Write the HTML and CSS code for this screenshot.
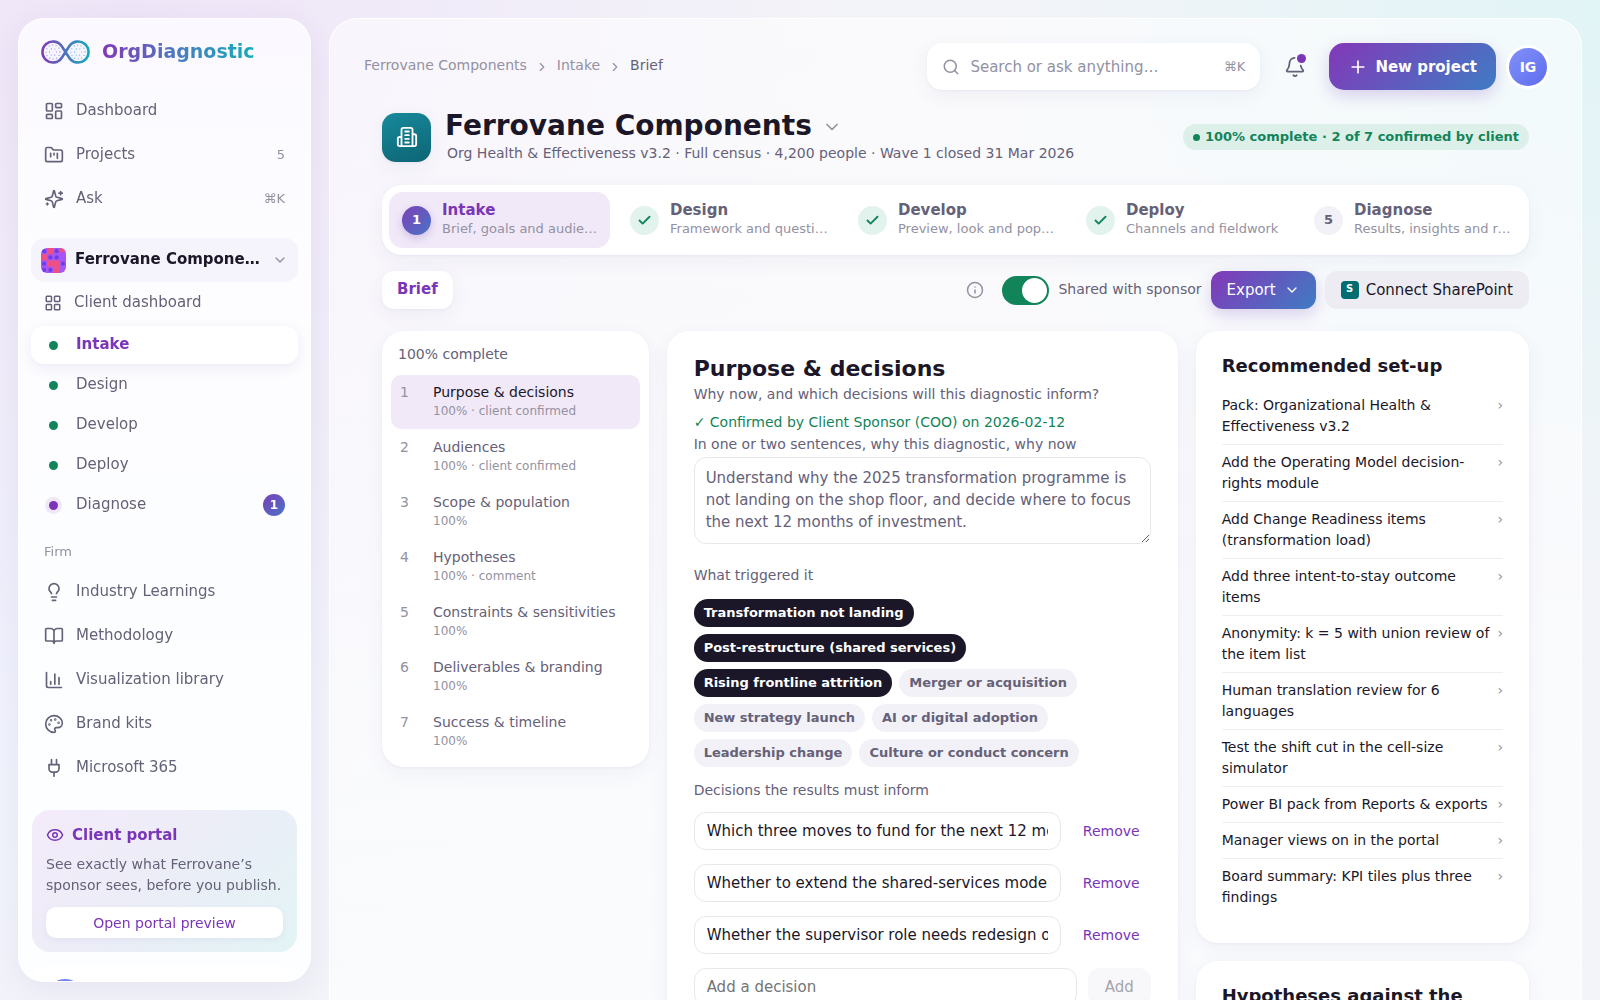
FILE: index.html
```html
<!DOCTYPE html>
<html lang="en">
<head>
<meta charset="utf-8">
<meta name="viewport" content="width=device-width, initial-scale=1">
<title>Brief · Ferrovane Components · OrgDiagnostic</title>
<link rel="stylesheet" href="styles.css">
</head>
<body>
<svg class="sprite" aria-hidden="true">
  <symbol id="i-dashboard" viewBox="0 0 24 24"><rect x="3" y="3" width="7" height="9" rx="1"/><rect x="14" y="3" width="7" height="5" rx="1"/><rect x="14" y="12" width="7" height="9" rx="1"/><rect x="3" y="16" width="7" height="5" rx="1"/></symbol>
  <symbol id="i-folder" viewBox="0 0 24 24"><path d="M4 20h16a2 2 0 0 0 2-2V8a2 2 0 0 0-2-2h-7.93a2 2 0 0 1-1.66-.9l-.82-1.2A2 2 0 0 0 7.93 3H4a2 2 0 0 0-2 2v13c0 1.1.9 2 2 2ZM8 10v4M12 10v2M16 10v6"/></symbol>
  <symbol id="i-sparkles" viewBox="0 0 24 24"><path d="M9.937 15.5A2 2 0 0 0 8.5 14.063l-6.135-1.582a.5.5 0 0 1 0-.962L8.5 9.936A2 2 0 0 0 9.937 8.5l1.582-6.135a.5.5 0 0 1 .963 0L14.063 8.5A2 2 0 0 0 15.5 9.937l6.135 1.581a.5.5 0 0 1 0 .964L15.5 14.063a2 2 0 0 0-1.437 1.437l-1.582 6.135a.5.5 0 0 1-.963 0zM20 3v4M22 5h-4M4 17v2M5 18H3"/></symbol>
  <symbol id="i-grid" viewBox="0 0 24 24"><rect x="3" y="3" width="7" height="7" rx="1"/><rect x="14" y="3" width="7" height="7" rx="1"/><rect x="14" y="14" width="7" height="7" rx="1"/><rect x="3" y="14" width="7" height="7" rx="1"/></symbol>
  <symbol id="i-down" viewBox="0 0 24 24"><path d="m6 9 6 6 6-6"/></symbol>
  <symbol id="i-right" viewBox="0 0 24 24"><path d="m9 18 6-6-6-6"/></symbol>
  <symbol id="i-bulb" viewBox="0 0 24 24"><path d="M15 14c.2-1 .7-1.700 1.500-2.500 1-.9 1.500-2.200 1.500-3.500A6 6 0 0 0 6 8c0 1 .2 2.200 1.500 3.500.7.7 1.300 1.500 1.500 2.500M9 18h6M10 22h4"/></symbol>
  <symbol id="i-book" viewBox="0 0 24 24"><path d="M12 7v14M3 18a1 1 0 0 1-1-1V4a1 1 0 0 1 1-1h5a4 4 0 0 1 4 4 4 4 0 0 1 4-4h5a1 1 0 0 1 1 1v13a1 1 0 0 1-1 1h-6a3 3 0 0 0-3 3 3 3 0 0 0-3-3z"/></symbol>
  <symbol id="i-chart" viewBox="0 0 24 24"><path d="M3 3v16a2 2 0 0 0 2 2h16M18 17V9M13 17V5M8 17v-3"/></symbol>
  <symbol id="i-palette" viewBox="0 0 24 24"><circle cx="13.500" cy="6.500" r=".5"/><circle cx="17.500" cy="10.500" r=".5"/><circle cx="8.500" cy="7.500" r=".5"/><circle cx="6.500" cy="12.500" r=".5"/><path d="M12 2C6.500 2 2 6.500 2 12s4.500 10 10 10c.926 0 1.648-.746 1.648-1.688 0-.437-.18-.835-.437-1.125-.29-.289-.438-.652-.438-1.125a1.640 1.640 0 0 1 1.668-1.668h1.996c3.051 0 5.555-2.503 5.555-5.554C21.965 6.012 17.461 2 12 2z"/></symbol>
  <symbol id="i-plug" viewBox="0 0 24 24"><path d="M12 22v-5M9 8V2M15 8V2M18 8v5a4 4 0 0 1-4 4h-4a4 4 0 0 1-4-4V8Z"/></symbol>
  <symbol id="i-eye" viewBox="0 0 24 24"><path d="M2.062 12.348a1 1 0 0 1 0-.696 10.750 10.750 0 0 1 19.876 0 1 1 0 0 1 0 .696 10.750 10.750 0 0 1-19.876 0"/><circle cx="12" cy="12" r="3"/></symbol>
  <symbol id="i-building" viewBox="0 0 24 24"><path d="M6 22V4a2 2 0 0 1 2-2h8a2 2 0 0 1 2 2v18ZM6 12H4a2 2 0 0 0-2 2v6a2 2 0 0 0 2 2h2M18 9h2a2 2 0 0 1 2 2v9a2 2 0 0 1-2 2h-2M10 6h4M10 10h4M10 14h4M10 18h4"/></symbol>
  <symbol id="i-bell" viewBox="0 0 24 24"><path d="M10.268 21a2 2 0 0 0 3.464 0M11.500 2.020A6 6 0 0 0 6 8c0 4.499-1.411 5.956-2.738 7.326A1 1 0 0 0 4 17h16a1 1 0 0 0 .74-1.673C19.700 14.250 18.700 13.100 18.250 10.500"/></symbol>
  <symbol id="i-search" viewBox="0 0 24 24"><circle cx="11" cy="11" r="8"/><path d="m21 21-4.300-4.300"/></symbol>
  <symbol id="i-plus" viewBox="0 0 24 24"><path d="M5 12h14M12 5v14"/></symbol>
  <symbol id="i-info" viewBox="0 0 24 24"><circle cx="12" cy="12" r="10"/><path d="M12 16v-4M12 8h.01"/></symbol>
  <symbol id="i-check" viewBox="0 0 24 24"><path d="M20 6 9 17l-5-5"/></symbol>
</svg>

<div class="app">
  <aside class="sidebar">
    <a class="brand" href="#">
      <svg class="brand-mark" viewBox="0 0 49 24" aria-hidden="true">
        <defs><linearGradient id="mark" gradientUnits="userSpaceOnUse" x1="0" y1="0" x2="49" y2="0"><stop offset="0" stop-color="#8338b0"/><stop offset=".5" stop-color="#4f74bd"/><stop offset="1" stop-color="#11abb9"/></linearGradient></defs>
        <path d="M20.800 6.300A10.500 10.500 0 1 0 20.800 17.700L28.200 6.300A10.500 10.500 0 1 1 28.200 17.700Z" fill="#f5f4ff" stroke="url(#mark)" stroke-width="2.600" stroke-linejoin="round"/>
        <g fill="none" stroke="#9a86dc" stroke-width="1.200" stroke-linecap="round" stroke-dasharray="0 3.600">
          <circle cx="12" cy="12" r="7"/><circle cx="12" cy="12" r="3.500"/>
          <circle cx="37" cy="12" r="7" stroke="#58b4dc"/><circle cx="37" cy="12" r="3.500" stroke="#58b4dc"/>
        </g>
      </svg>
      <span class="brand-name">OrgDiagnostic</span>
    </a>

    <nav class="nav" aria-label="Workspace">
      <a class="nav-item" href="#"><svg class="icon"><use href="#i-dashboard"/></svg><span class="nav-label">Dashboard</span></a>
      <a class="nav-item" href="#"><svg class="icon"><use href="#i-folder"/></svg><span class="nav-label">Projects</span><span class="nav-hint">5</span></a>
      <a class="nav-item" href="#"><svg class="icon"><use href="#i-sparkles"/></svg><span class="nav-label">Ask</span><span class="nav-hint">⌘K</span></a>
    </nav>

    <button class="project-switch" type="button">
      <svg class="project-thumb" viewBox="0 0 24 24" aria-hidden="true">
        <rect width="24" height="24" fill="#a855f7"/>
        <g fill="#ef5084"><rect x="6" width="6" height="6"/><rect x="18" width="6" height="4"/><rect y="6" width="6" height="6"/><rect x="6" y="12" width="12" height="6"/><rect x="12" y="18" width="6" height="6"/></g>
        <g fill="#6d3fe0"><circle cx="3" cy="3" r="2"/><circle cx="15" cy="3" r="2"/><circle cx="9" cy="9" r="2"/><circle cx="15" cy="9" r="2"/><circle cx="3" cy="15" r="2"/><circle cx="21" cy="15" r="2"/><circle cx="9" cy="21" r="2"/><circle cx="3" cy="21" r="2"/></g>
      </svg>
      <span class="project-name">Ferrovane Components</span>
      <svg class="icon icon-sm muted"><use href="#i-down"/></svg>
    </button>

    <nav class="subnav" aria-label="Project">
      <a class="sub-item sub-first" href="#"><svg class="icon icon-md"><use href="#i-grid"/></svg><span class="nav-label">Client dashboard</span></a>
      <a class="sub-item active" href="#" aria-current="page"><span class="dot"></span><span class="nav-label">Intake</span></a>
      <a class="sub-item" href="#"><span class="dot"></span><span class="nav-label">Design</span></a>
      <a class="sub-item" href="#"><span class="dot"></span><span class="nav-label">Develop</span></a>
      <a class="sub-item" href="#"><span class="dot"></span><span class="nav-label">Deploy</span></a>
      <a class="sub-item" href="#"><span class="dot current"></span><span class="nav-label">Diagnose</span><span class="count">1</span></a>
    </nav>

    <h2 class="nav-heading">Firm</h2>
    <nav class="nav" aria-label="Firm">
      <a class="nav-item" href="#"><svg class="icon"><use href="#i-bulb"/></svg><span class="nav-label">Industry Learnings</span></a>
      <a class="nav-item" href="#"><svg class="icon"><use href="#i-book"/></svg><span class="nav-label">Methodology</span></a>
      <a class="nav-item" href="#"><svg class="icon"><use href="#i-chart"/></svg><span class="nav-label">Visualization library</span></a>
      <a class="nav-item" href="#"><svg class="icon"><use href="#i-palette"/></svg><span class="nav-label">Brand kits</span></a>
      <a class="nav-item" href="#"><svg class="icon"><use href="#i-plug"/></svg><span class="nav-label">Microsoft 365</span></a>
    </nav>

    <section class="portal">
      <h2 class="portal-title"><svg class="icon"><use href="#i-eye"/></svg>Client portal</h2>
      <p class="portal-text">See exactly what Ferrovane’s sponsor sees, before you publish.</p>
      <button class="portal-button" type="button">Open portal preview</button>
    </section>

    <button class="account" type="button"><span class="account-avatar"></span><span class="account-name">Iselle</span></button>
  </aside>

  <main class="main">
    <header class="topbar">
      <nav class="crumbs" aria-label="Breadcrumb">
        <a href="#">Ferrovane Components</a><svg class="icon icon-xs"><use href="#i-right"/></svg><a href="#">Intake</a><svg class="icon icon-xs"><use href="#i-right"/></svg><span class="crumb-here">Brief</span>
      </nav>
      <label class="search">
        <svg class="icon"><use href="#i-search"/></svg>
        <input type="search" placeholder="Search or ask anything…" aria-label="Search or ask anything">
        <kbd>⌘K</kbd>
      </label>
      <button class="bell" type="button" aria-label="Notifications"><svg class="icon icon-lg"><use href="#i-bell"/></svg><span class="bell-dot"></span></button>
      <button class="primary new-project" type="button"><svg class="icon"><use href="#i-plus"/></svg>New project</button>
      <button class="avatar" type="button">IG</button>
    </header>

    <div class="content">
      <section class="hero">
        <span class="hero-icon"><svg class="icon icon-lg"><use href="#i-building"/></svg></span>
        <div class="hero-text">
          <h1>Ferrovane Components <svg class="icon"><use href="#i-down"/></svg></h1>
          <p>Org Health &amp; Effectiveness v3.2 · Full census · 4,200 people · Wave 1 closed 31 Mar 2026</p>
        </div>
        <span class="status"><span class="status-dot"></span>100% complete · 2 of 7 confirmed by client</span>
      </section>

      <nav class="stepper" aria-label="Project stages">
        <a class="step active" href="#" aria-current="step"><span class="step-mark">1</span><span class="step-text"><strong>Intake</strong><small>Brief, goals and audiences</small></span></a>
        <a class="step done" href="#"><span class="step-mark"><svg class="icon icon-sm"><use href="#i-check"/></svg></span><span class="step-text"><strong>Design</strong><small>Framework and questions</small></span></a>
        <a class="step done" href="#"><span class="step-mark"><svg class="icon icon-sm"><use href="#i-check"/></svg></span><span class="step-text"><strong>Develop</strong><small>Preview, look and population</small></span></a>
        <a class="step done" href="#"><span class="step-mark"><svg class="icon icon-sm"><use href="#i-check"/></svg></span><span class="step-text"><strong>Deploy</strong><small>Channels and fieldwork</small></span></a>
        <a class="step" href="#"><span class="step-mark">5</span><span class="step-text"><strong>Diagnose</strong><small>Results, insights and reports</small></span></a>
      </nav>

      <div class="toolbar">
        <a class="tab" href="#" aria-current="page">Brief</a>
        <svg class="icon info"><use href="#i-info"/></svg>
        <input class="switch" type="checkbox" id="shared" checked>
        <label class="switch-label" for="shared">Shared with sponsor</label>
        <button class="primary export" type="button">Export<svg class="icon icon-sm"><use href="#i-down"/></svg></button>
        <button class="secondary" type="button"><span class="sp-logo">S</span>Connect SharePoint</button>
      </div>

      <div class="columns">
        <nav class="card outline" aria-label="Brief sections">
          <p class="outline-head">100% complete</p>
          <a class="outline-item active" href="#"><span class="num">1</span><span>Purpose &amp; decisions<small>100% · client confirmed</small></span></a>
          <a class="outline-item" href="#"><span class="num">2</span><span>Audiences<small>100% · client confirmed</small></span></a>
          <a class="outline-item" href="#"><span class="num">3</span><span>Scope &amp; population<small>100%</small></span></a>
          <a class="outline-item" href="#"><span class="num">4</span><span>Hypotheses<small>100% · comment</small></span></a>
          <a class="outline-item" href="#"><span class="num">5</span><span>Constraints &amp; sensitivities<small>100%</small></span></a>
          <a class="outline-item" href="#"><span class="num">6</span><span>Deliverables &amp; branding<small>100%</small></span></a>
          <a class="outline-item" href="#"><span class="num">7</span><span>Success &amp; timeline<small>100%</small></span></a>
        </nav>

        <section class="card form">
          <h2>Purpose &amp; decisions</h2>
          <p class="lead">Why now, and which decisions will this diagnostic inform?</p>
          <p class="confirmed">✓ Confirmed by Client Sponsor (COO) on 2026-02-12</p>
          <label class="field-label" for="why">In one or two sentences, why this diagnostic, why now</label>
          <textarea id="why" rows="3">Understand why the 2025 transformation programme is not landing on the shop floor, and decide where to focus the next 12 months of investment.</textarea>

          <p class="field-label group-label">What triggered it</p>
          <div class="chips">
            <button class="chip on" type="button" aria-pressed="true">Transformation not landing</button>
            <button class="chip on" type="button" aria-pressed="true">Post-restructure (shared services)</button>
            <button class="chip on" type="button" aria-pressed="true">Rising frontline attrition</button>
            <button class="chip" type="button">Merger or acquisition</button>
            <button class="chip" type="button">New strategy launch</button>
            <button class="chip" type="button">AI or digital adoption</button>
            <button class="chip" type="button">Leadership change</button>
            <button class="chip" type="button">Culture or conduct concern</button>
          </div>

          <p class="field-label decisions-label">Decisions the results must inform</p>
          <div class="decisions">
            <div class="decision"><input type="text" aria-label="Decision 1" value="Which three moves to fund for the next 12 months"><button class="link" type="button">Remove</button></div>
            <div class="decision"><input type="text" aria-label="Decision 2" value="Whether to extend the shared-services model to all sites"><button class="link" type="button">Remove</button></div>
            <div class="decision"><input type="text" aria-label="Decision 3" value="Whether the supervisor role needs redesign or support"><button class="link" type="button">Remove</button></div>
            <div class="decision"><input type="text" aria-label="New decision" placeholder="Add a decision"><button class="add" type="button" disabled>Add</button></div>
          </div>
        </section>

        <div class="side">
          <section class="card setup">
            <h3>Recommended set-up</h3>
            <ul>
              <li><a href="#">Pack: Organizational Health &amp; Effectiveness v3.2<span>›</span></a></li>
              <li><a href="#">Add the Operating Model decision-rights module<span>›</span></a></li>
              <li><a href="#">Add Change Readiness items (transformation load)<span>›</span></a></li>
              <li><a href="#">Add three intent-to-stay outcome items<span>›</span></a></li>
              <li><a href="#">Anonymity: k = 5 with union review of the item list<span>›</span></a></li>
              <li><a href="#">Human translation review for 6 languages<span>›</span></a></li>
              <li><a href="#">Test the shift cut in the cell-size simulator<span>›</span></a></li>
              <li><a href="#">Power BI pack from Reports &amp; exports<span>›</span></a></li>
              <li><a href="#">Manager views on in the portal<span>›</span></a></li>
              <li><a href="#">Board summary: KPI tiles plus three findings<span>›</span></a></li>
            </ul>
          </section>
          <section class="card setup">
            <h3>Hypotheses against the evidence</h3>
          </section>
        </div>
      </div>
    </div>
  </main>
</div>
</body>
</html>
```
FILE: styles.css
```css
:root {
  --ink: #1b1728;
  --text: #656178;
  --muted: #9391a2;
  --purple: #7a35b8;
  --green: #12845a;
  --line: #efeef3;
  --brand: linear-gradient(135deg, #8338b8, #3f7cc4);
  --shadow: 0 6px 20px rgba(70, 60, 130, .06), 0 1px 3px rgba(70, 60, 130, .05);
}

* { box-sizing: border-box; }

body {
  margin: 0;
  font: 15px/22px "DejaVu Sans", Verdana, sans-serif;
  color: var(--ink);
  background:
    radial-gradient(circle at 8% 0, #efe5f8 0, transparent 42%),
    radial-gradient(circle at 100% 0, #e1f4f6 0, transparent 32%),
    radial-gradient(circle at 0 62%, #f0f2fd 0, transparent 30%),
    #f3f4f9;
}

h1, h2, h3, p, ul { margin: 0; padding: 0; }
ul { list-style: none; }
a { color: inherit; text-decoration: none; }
button, input, textarea, kbd { font: inherit; color: inherit; }
button { border: 0; background: none; padding: 0; cursor: pointer; }
.sprite { display: none; }

.icon {
  width: 20px;
  height: 20px;
  flex: none;
  fill: none;
  stroke: currentColor;
  stroke-width: 2;
  stroke-linecap: round;
  stroke-linejoin: round;
}
.icon-xs { width: 14px; height: 14px; }
.icon-sm { width: 16px; height: 16px; }
.icon-md { width: 18px; height: 18px; }
.icon-lg { width: 22px; height: 22px; }
.muted { color: var(--muted); }

.app {
  height: 100vh;
  overflow-y: auto;
  scrollbar-width: none;
  display: grid;
  grid-template-columns: 293px minmax(0, 1fr);
  align-items: start;
  gap: 18px;
  padding: 18px;
}

/* Sidebar */
.sidebar {
  position: sticky;
  top: 0;
  height: calc(100vh - 36px);
  overflow: hidden;
  padding: 16px 12px;
  border: 1px solid rgba(255, 255, 255, .8);
  border-radius: 26px;
  background: linear-gradient(#fbf9ff, #fdfdff 30%, #fcfeff);
  box-shadow: 0 8px 30px rgba(70, 60, 130, .08);
}
.brand { display: flex; align-items: center; gap: 12px; height: 34px; margin: 0 10px 20px; }
.brand-mark { width: 49px; height: 24px; }
.brand-name {
  padding-bottom: 2px;
  font-size: 19px;
  line-height: 26px;
  font-weight: 700;
  color: transparent;
  background: linear-gradient(90deg, #8338b8, #4a7cc0 50%, #12adba);
  background-clip: text;
  -webkit-background-clip: text;
}
.nav { display: grid; }
.nav-item, .sub-item {
  display: flex;
  align-items: center;
  gap: 12px;
  padding: 0 13px;
  color: var(--text);
}
.nav-item { height: 44px; }
.nav-label { flex: 1; padding-bottom: 3px; }
.nav-hint { font-size: 13px; color: var(--muted); }
.project-switch {
  display: flex;
  align-items: center;
  gap: 9px;
  width: 100%;
  height: 44px;
  margin-top: 17px;
  padding: 0 10px;
  border-radius: 14px;
  background: #f5f3fc;
  text-align: left;
}
.project-thumb { width: 25px; height: 25px; border-radius: 6px; }
.project-name {
  flex: 1;
  overflow: hidden;
  padding-bottom: 3px;
  font-weight: 700;
  white-space: nowrap;
  text-overflow: ellipsis;
}
.subnav { display: grid; gap: 2px; }
.sub-item { height: 38px; border-radius: 13px; }
.sub-first { height: 42px; }
.dot {
  width: 9px;
  height: 9px;
  margin: 0 6px 0 5px;
  flex: none;
  border-radius: 50%;
  background: var(--green);
}
.dot.current { background: var(--purple); box-shadow: 0 0 0 4px #f0e7f8; }
.sub-item.active {
  color: var(--purple);
  font-weight: 700;
  background: #fff;
  box-shadow: 0 4px 14px rgba(90, 70, 160, .1);
}
.count {
  width: 22px;
  height: 22px;
  border-radius: 50%;
  background: linear-gradient(135deg, #7a40b8, #4a74c6);
  color: #fff;
  font-size: 12px;
  font-weight: 700;
  text-align: center;
}
.nav-heading { margin: 18px 13px 8px; font-size: 13px; line-height: 20px; font-weight: 400; color: var(--muted); }
.portal {
  display: grid;
  gap: 8px;
  margin: 20px 1px 13px;
  padding: 14px;
  border-radius: 18px;
  background: linear-gradient(135deg, #f4ebfa, #ebedf7 50%, #e3f4f5);
}
.portal-title { display: flex; align-items: center; gap: 8px; font-size: 15px; line-height: 22px; color: var(--purple); }
.portal-title .icon { width: 18px; height: 18px; }
.portal-text { font-size: 14px; line-height: 21px; color: var(--text); }
.portal-button {
  height: 31px;
  margin-top: 3px;
  border-radius: 10px;
  background: #fff;
  color: var(--purple);
  font-size: 14px;
  box-shadow: 0 2px 6px rgba(70, 60, 130, .06);
}
.account { display: flex; align-items: flex-start; gap: 14px; width: 100%; padding: 14px 16px; border-radius: 18px; background: #fff; font-weight: 700; }
.account-avatar { width: 36px; height: 36px; border-radius: 50%; background: #7486f5; }

/* Main panel */
.main {
  min-height: calc(100vh - 18px);
  padding: 24px 34px 53px;
  border: 1px solid rgba(255, 255, 255, .9);
  border-radius: 28px;
  background: linear-gradient(rgba(255, 255, 255, .55), rgba(255, 255, 255, .62));
}
.topbar { display: flex; align-items: center; height: 47px; }
.crumbs { display: flex; flex: 1; align-items: center; gap: 8px; padding-bottom: 3px; font-size: 14px; color: var(--muted); }
.crumbs .icon { margin-top: 3px; }
.crumb-here { color: var(--text); }
.search {
  display: flex;
  align-items: center;
  gap: 10px;
  width: 333px;
  height: 47px;
  padding: 0 15px;
  border-radius: 15px;
  background: #fff;
  color: var(--muted);
  box-shadow: var(--shadow);
}
.search .icon { width: 18px; height: 18px; }
.search input { flex: 1; min-width: 0; padding: 0; border: 0; outline: 0; background: none; }
.search input::placeholder { color: var(--muted); }
.search kbd { font-size: 13px; }
.bell { position: relative; display: grid; place-items: center; width: 47px; height: 47px; margin: 0 11px; color: var(--text); }
.bell-dot { position: absolute; top: 11px; right: 12px; width: 9px; height: 9px; border-radius: 50%; background: var(--purple); }
.primary {
  display: flex;
  align-items: center;
  background: var(--brand);
  color: #fff;
  box-shadow: 0 6px 16px rgba(110, 60, 180, .22);
}
.new-project { gap: 7px; height: 47px; padding: 0 19px; border-radius: 15px; font-weight: 700; }
.avatar {
  width: 38px;
  height: 38px;
  margin-left: 13px;
  border-radius: 50%;
  background: linear-gradient(135deg, #8191f7, #5f6df0);
  box-shadow: 0 0 0 3px #fff;
  color: #fff;
  font-size: 14px;
  font-weight: 700;
}

.content { margin: 19px 18px 0; }
.hero { display: flex; align-items: center; gap: 14px; height: 56px; }
.hero-icon {
  display: grid;
  place-items: center;
  width: 49px;
  height: 49px;
  border-radius: 14px;
  background: linear-gradient(160deg, #178a9c, #0d6473);
  color: #fff;
  box-shadow: var(--shadow);
}
.hero-text { flex: 1; min-width: 0; padding-bottom: 1px; }
.hero h1 { display: flex; align-items: center; gap: 10px; font-size: 28px; line-height: 32px; }
.hero h1 .icon { margin-top: 2px; color: var(--muted); }
.hero p { padding-left: 2px; font-size: 14px; line-height: 22px; color: var(--text); }
.status {
  display: flex;
  align-items: center;
  gap: 5px;
  padding: 2px 10px;
  border-radius: 13px;
  background: #dcefe9;
  color: var(--green);
  font-size: 13px;
  font-weight: 700;
}
.status-dot { width: 7px; height: 7px; border-radius: 50%; background: currentColor; }

.stepper {
  display: grid;
  grid-template-columns: repeat(5, minmax(0, 1fr));
  gap: 7px;
  margin-top: 20px;
  padding: 7px;
  border-radius: 20px;
  background: #fff;
  box-shadow: var(--shadow);
}
.step { display: flex; align-items: center; gap: 11px; height: 56px; padding: 0 7px 0 13px; border-radius: 14px; }
.step.active { background: #f1e9f8; }
.step-mark {
  display: grid;
  place-items: center;
  flex: none;
  width: 29px;
  height: 29px;
  border-radius: 50%;
  background: #f2f1f7;
  color: var(--text);
  font-size: 13px;
  font-weight: 700;
}
.step.done .step-mark { background: #e2f2ed; color: var(--green); }
.step.done .icon { width: 15px; height: 15px; stroke-width: 3; }
.step.active .step-mark { background: linear-gradient(135deg, #7a40b8, #4a74c6); color: #fff; box-shadow: 0 3px 8px rgba(110, 60, 180, .25); }
.step-text { display: grid; min-width: 0; padding-bottom: 2px; }
.step-text strong { line-height: 19px; color: var(--text); }
.step.active strong { color: var(--purple); }
.step-text small { overflow: hidden; font-size: 13px; line-height: 18px; color: var(--muted); white-space: nowrap; text-overflow: ellipsis; }

.toolbar { display: flex; align-items: center; gap: 9px; height: 38px; margin-top: 16px; }
.tab { margin-right: auto; padding: 7px 15px 9px; border-radius: 12px; background: #fff; box-shadow: var(--shadow); color: var(--purple); font-weight: 700; }
.info { width: 18px; height: 18px; margin-right: 9px; color: var(--muted); }
.switch {
  appearance: none;
  width: 47px;
  height: 29px;
  margin: 0;
  padding: 2px;
  border-radius: 15px;
  background: #cfcdd8;
}
.switch::before { content: ""; display: block; width: 25px; height: 25px; border-radius: 50%; background: #fff; }
.switch:checked { background: var(--green); }
.switch:checked::before { margin-left: auto; }
.switch-label { padding-bottom: 3px; font-size: 14px; color: var(--text); }
.export { gap: 8px; height: 38px; padding: 0 16px; border-radius: 12px; }
.secondary { display: flex; align-items: center; gap: 7px; height: 38px; padding: 0 16px; border-radius: 12px; background: #ececf2; }
.sp-logo { width: 18px; height: 18px; border-radius: 4px; background: #036c70; color: #fff; font-size: 10px; line-height: 16px; font-weight: 700; }

.columns { display: grid; grid-template-columns: 24fr 46fr 30fr; align-items: start; gap: 18px; margin-top: 22px; }
.card { min-width: 0; border-radius: 22px; background: #fff; box-shadow: var(--shadow); }
.outline { display: grid; gap: 1px; padding: 12px 9px 8px; }
.outline-head { padding: 0 7px 9px; font-size: 14px; color: var(--text); }
.outline-item { display: grid; grid-template-columns: 24px 1fr; gap: 9px; height: 54px; padding: 7px 9px; border-radius: 10px; font-size: 14px; line-height: 20px; color: var(--text); }
.outline-item.active { background: #f1e9f8; color: var(--ink); }
.outline-item .num { color: var(--muted); }
.outline-item small { display: block; font-size: 12px; line-height: 19px; color: var(--muted); }

.form { padding: 25px 27px 27px; }
.form h2 { margin-bottom: 1px; font-size: 22px; line-height: 26px; }
.lead, .confirmed, .field-label { display: block; font-size: 14px; line-height: 22px; color: var(--text); }
.confirmed { margin-top: 6px; color: var(--green); }
textarea {
  display: block;
  width: 100%;
  height: 87px;
  margin-top: 2px;
  padding: 9px 11px;
  border: 1px solid #e8e7ee;
  border-radius: 12px;
  background: #fff;
  color: var(--text);
  resize: vertical;
}
.group-label { margin: 20px 0 13px; }
.chips { display: flex; flex-wrap: wrap; gap: 7px; }
.chip { height: 28px; padding: 0 10px; border-radius: 14px; background: #f2f1f7; color: var(--text); font-size: 13px; font-weight: 700; }
.chip.on { background: var(--ink); color: #fff; }
.decisions-label { margin: 12px 0 11px; }
.decisions { display: grid; gap: 14px; }
.decision { display: flex; align-items: center; gap: 11px; }
.decision input { flex: 1; min-width: 0; height: 38px; padding: 0 12px; border: 1px solid #e8e7ee; border-radius: 12px; background: #fff; }
.decision input::placeholder { color: #757575; }
.link { padding: 0 11px; color: var(--purple); font-size: 14px; }
.add { height: 38px; padding: 0 17px; border-radius: 12px; background: #f8f8fa; color: #a5a4ac; }

.side { display: grid; gap: 18px; min-width: 0; }
.setup { padding: 23px 26px 28px; }
.setup h3 { font-size: 18px; line-height: 24px; }
.setup ul { margin-top: 10px; }
.setup li + li { border-top: 1px solid var(--line); }
.setup a { display: flex; justify-content: space-between; gap: 4px; padding: 7px 0; font-size: 14px; line-height: 21px; }
.setup a span { color: var(--muted); }
```
